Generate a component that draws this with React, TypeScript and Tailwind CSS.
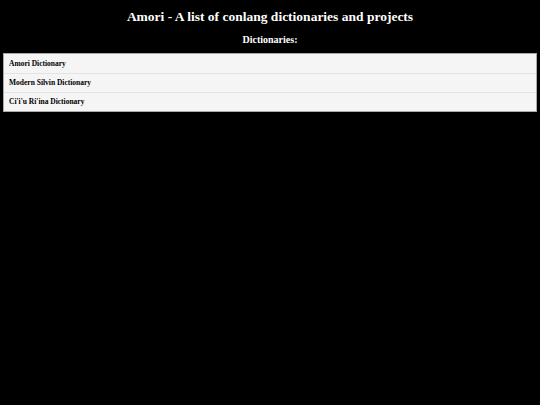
import React from 'react';

const dictionaries = ['Amori Dictionary', 'Modern Silvin Dictionary', "Ci'i'u Ri'ina Dictionary"];

export default function App() {
  return (
    <div className="min-h-[405px] w-full bg-black text-white font-['Liberation_Serif',serif]">
      <h1 className="pt-[7px] text-center text-[13.5px] font-bold leading-[19px]">
        Amori - A list of conlang dictionaries and projects
      </h1>
      <h2 className="mt-[8px] text-center text-[10px] font-bold leading-[12px]">Dictionaries:</h2>
      <ul className="mx-[3px] mt-[7px] border border-[#a9a9a9] bg-[#f5f5f5] text-black">
        {dictionaries.map((name, i) => (
          <li
            key={name}
            className={`flex h-[19px] items-center px-[5px] text-[7.5px] font-bold ${
              i > 0 ? 'border-t border-[#e3e3e3]' : ''
            }`}
          >
            {name}
          </li>
        ))}
      </ul>
    </div>
  );
}
